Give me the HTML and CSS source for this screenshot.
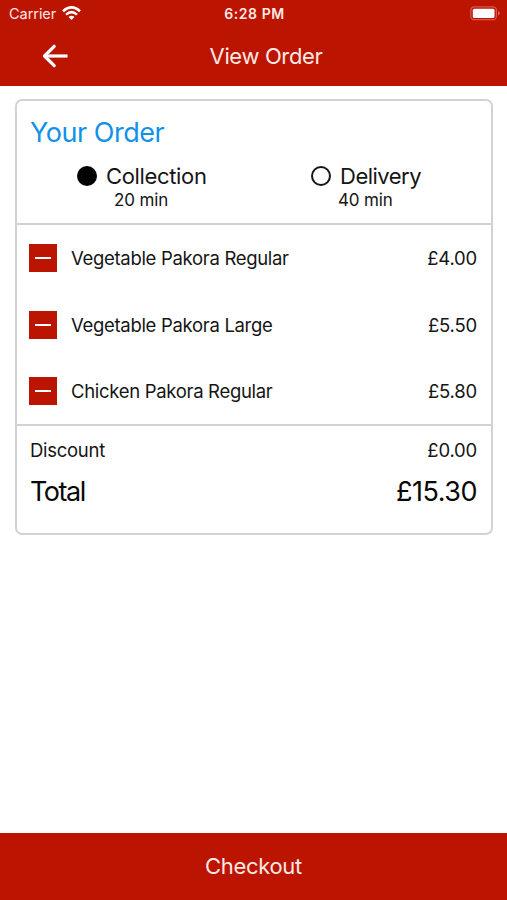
FILE: index.html
```html
<!DOCTYPE html>
<html lang="en">
<head>
<meta charset="utf-8">
<title>View Order</title>
<link rel="stylesheet" href="styles.css">
</head>
<body>
<header class="header">
  <div class="status">
    <div class="status-left">
      <span class="carrier">Carrier</span>
      <svg class="wifi" width="19" height="14" viewBox="0 0 19 14" fill="none" stroke="#fff" stroke-width="2.5">
        <path d="M1 5.200Q9.500-2.400 18 5.200"/>
        <path d="M4 8.600Q9.500 3.600 15 8.600"/>
        <path d="M9.500 14L6.500 11Q9.500 8.400 12.500 11Z" fill="#fff" stroke="none"/>
      </svg>
    </div>
    <span class="time">6:28 PM</span>
    <svg class="battery" width="31" height="15" viewBox="0 0 31 15" fill="none">
      <rect x=".8" y=".8" width="25.6" height="12.9" rx="3.5" stroke="#d9564c" stroke-width="1.3"/>
      <rect x="2.800" y="2.700" width="21.700" height="9.200" rx="1.500" fill="#fff"/>
      <path d="M28 5v4.500Q29.800 8.700 29.800 7.250T28 5Z" fill="#d9665d"/>
    </svg>
  </div>
  <div class="nav">
    <svg class="back" width="26" height="24" viewBox="0 0 26 24" fill="none" stroke="#fff" stroke-width="3.2" stroke-linecap="round" stroke-linejoin="round">
      <path d="M12.200 2.300L2.500 12L12.200 21.700"/>
      <path d="M3 12H25.500" stroke-linecap="butt"/>
    </svg>
    <h1 class="title">View Order</h1>
  </div>
</header>
<main class="main">
  <section class="card">
    <div class="intro">
      <h2 class="heading">Your Order</h2>
      <div class="options">
        <div class="option">
          <div class="choice"><span class="radio radio-on"></span><span class="collection">Collection</span></div>
          <div class="eta">20 min</div>
        </div>
        <div class="option">
          <div class="choice"><span class="radio"></span><span class="delivery">Delivery</span></div>
          <div class="eta">40 min</div>
        </div>
      </div>
    </div>
    <div class="items">
      <div class="item"><span class="minus"></span><span class="name">Vegetable Pakora Regular</span><span class="price">£4.00</span></div>
      <div class="item"><span class="minus"></span><span class="name">Vegetable Pakora Large</span><span class="price">£5.50</span></div>
      <div class="item"><span class="minus"></span><span class="name">Chicken Pakora Regular</span><span class="price">£5.80</span></div>
    </div>
    <div class="summary">
      <div class="discount"><span>Discount</span><span class="price">£0.00</span></div>
      <div class="total"><span class="total-label">Total</span><span class="amount">£15.30</span></div>
    </div>
  </section>
</main>
<footer class="checkout">Checkout</footer>
</body>
</html>
```
FILE: styles.css
```css
* { box-sizing: border-box; }
body {
  margin: 0;
  height: 900px;
  display: flex;
  flex-direction: column;
  background: #fff;
  color: #151515;
  font-family: Inter, "Liberation Sans", sans-serif;
  white-space: nowrap;
  overflow: hidden;
}
h1, h2 { margin: 0; font-weight: 400; }
.header { height: 86px; background: #bb1400; color: #ffe9e4; }
.status {
  height: 27px;
  display: grid;
  grid-template-columns: 1fr auto 1fr;
  align-items: center;
  padding: 0 7px 0 9px;
}
.status-left { display: flex; align-items: center; gap: 6px; }
.carrier { font-size: 14.5px; letter-spacing: -.05px; }
.wifi { margin-top: -1px; }
.time { font-size: 14px; font-weight: 600; letter-spacing: .55px; }
.battery { justify-self: end; margin-right: -1px; }
.nav {
  height: 57px;
  display: grid;
  grid-template-columns: 1fr auto 1fr;
  align-items: center;
  padding: 0 17px 0 42px;
}
.nav::after { content: ""; }
.title { font-size: 22px; line-height: 55px; padding-top: 2px; letter-spacing: -.36px; }
.main { flex: 1; padding: 13px 14px 0 15px; }
.card {
  height: 436px;
  border: 2px solid #d2d2d2;
  border-radius: 7px;
}
.intro { height: 124px; padding: 15px 13px 0; border-bottom: 2px solid #d2d2d2; }
.heading { font-size: 27px; line-height: 34px; letter-spacing: -.47px; color: #1192e8; }
.options { display: flex; margin-top: 12px; }
.option { width: 50%; }
.option:first-child { padding-left: 47px; }
.option:last-child { padding-left: 57px; }
.choice { display: flex; align-items: center; gap: 9px; height: 28px; font-size: 22px; letter-spacing: -.35px; }
.delivery { letter-spacing: -.5px; }
.radio { width: 20px; height: 20px; border: 2px solid #151515; border-radius: 50%; }
.radio-on { background: #000; border-color: #000; }
.eta { font-size: 17px; line-height: 20px; letter-spacing: -.15px; padding-left: 37px; }
.option:last-child .eta { padding-left: 27px; }
.items { height: 201px; border-bottom: 2px solid #d2d2d2; }
.item { height: 66.5px; display: flex; align-items: center; padding: 0 14px 0 12px; font-size: 18.5px; }
.name { letter-spacing: -.31px; }
.minus { width: 28px; height: 28px; background: #bb1400; display: grid; place-items: center; margin-right: 14px; }
.minus::before { content: ""; width: 16px; height: 2px; background: #fff; }
.price { margin-left: auto; letter-spacing: -.2px; }
.summary { padding: 9px 14px 0 13px; font-size: 18.5px; }
.discount, .total { display: flex; justify-content: space-between; }
.discount { line-height: 30px; letter-spacing: -.28px; }
.total { font-size: 27px; line-height: 38px; margin-top: 8px; color: #080808; align-items: baseline; }
.total-label { letter-spacing: -1.5px; }
.amount { letter-spacing: -.5px; }
.checkout { height: 67px; background: #bb1400; color: #ffe9e4; font-size: 22px; line-height: 67px; letter-spacing: -.33px; text-align: center; }
```
